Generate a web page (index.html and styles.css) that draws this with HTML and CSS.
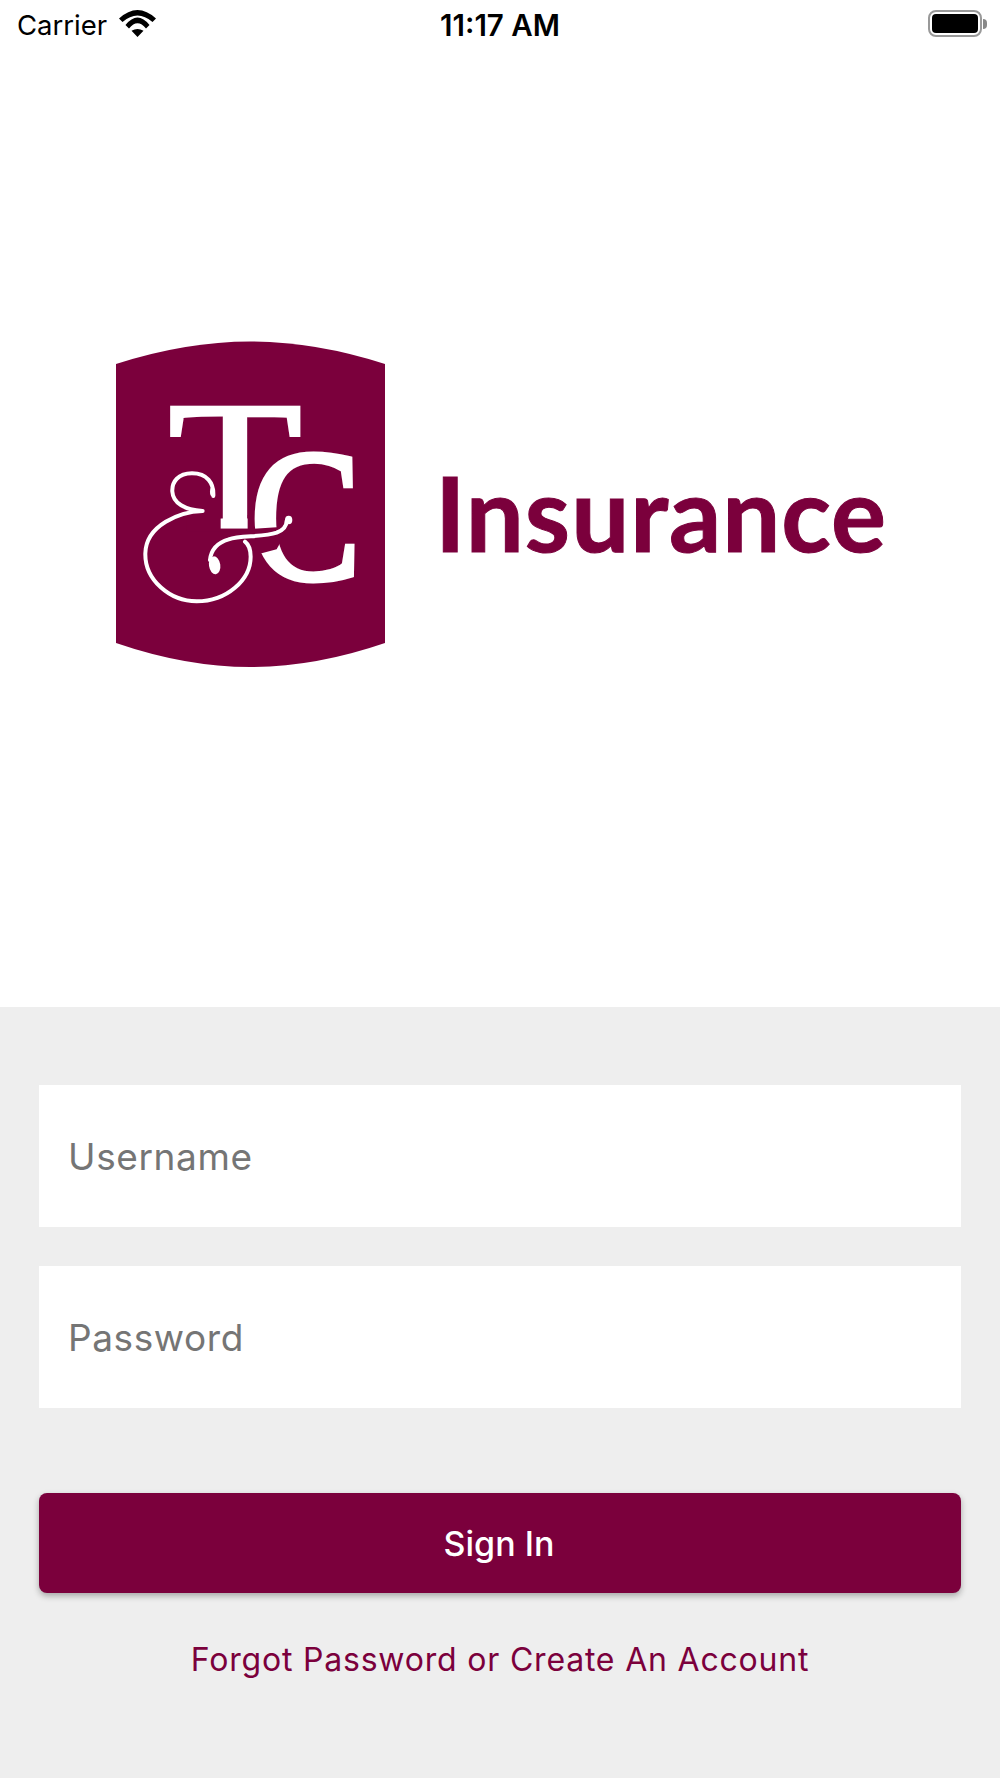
FILE: index.html
```html
<!DOCTYPE html>
<html lang="en">
<head>
<meta charset="utf-8">
<title>T&amp;C Insurance</title>
<link rel="stylesheet" href="styles.css">
</head>
<body>
<div class="screen">
  <header class="status">
    <div class="status-left">
      <span class="carrier">Carrier</span>
      <svg class="wifi" viewBox="0 0 37 27" width="37" height="27"><path d="M18.500 27 12.500 20.800Q18.500 17 24.500 20.800ZM6.500 15Q18.500 0 30.500 15L27 18.500Q18.500 8 10 18.500ZM0 8.500Q18.500 -8.500 37 8.500L33.500 12Q18.500 -1 3.500 12Z"/></svg>
    </div>
    <span class="time">11:17 AM</span>
    <div class="status-right">
      <span class="battery"><span class="battery-fill"></span></span>
      <span class="battery-nub"></span>
    </div>
  </header>

  <main class="brand">
    <div class="logo">
      <svg class="mark" viewBox="116 340 270 330" width="270" height="330" role="img" aria-label="T&amp;C">
        <path class="shield" d="M116 364Q186 341.500 250.500 341.500Q315 341.500 385 364V643Q315 667 250.500 667Q186 667 116 643Z"/>
        <g transform="translate(130 390) scale(.3333)">
          <text class="glyph" transform="translate(114 410) scale(3.600 3.000)" font-size="183">T</text>
          <path class="cut" d="M170 375H272V425H170ZM353 375H470V425H353ZM272 417H353V425H272Z"/>
          <text class="glyph glyph-c" transform="translate(360 566) scale(2.640 2.970)" font-size="190">C</text>
          <path class="cut" d="M350 418 440 412 472 420 440 478 395 490 350 490Z"/>
          <path class="amp" d="M250 318C252 280 232 250 186 250C145 250 125 275 127 305C129 340 165 360 218 363C150 365 48 405 46 490C44 570 120 634 200 634C290 634 362 570 362 500C362 480 358 465 345 455"/>
          <path class="amp" d="M470 392C470 410 460 420 440 428C400 442 330 436 296 448C262 458 243 480 240 510"/>
          <ellipse class="blob" cx="254" cy="526" rx="17" ry="27" transform="rotate(-8 254 526)"/>
          <ellipse class="blob" cx="476" cy="390" rx="11" ry="13"/>
          <ellipse class="blob" cx="247" cy="305" rx="7" ry="14"/>
        </g>
      </svg>
      <span class="wordmark">Insurance</span>
    </div>
  </main>

  <section class="login">
    <input class="field" type="text" placeholder="Username">
    <input class="field field-second" type="password" placeholder="Password">
    <button class="signin" type="button">Sign In</button>
    <a class="link" href="#">Forgot Password or Create An Account</a>
  </section>
</div>
</body>
</html>
```

FILE: styles.css
```css
* { box-sizing: border-box; }
html, body { margin: 0; padding: 0; background: #fff; }
body { font-family: Inter, "Noto Sans", sans-serif; }
.screen { width: 1000px; height: 1778px; display: flex; flex-direction: column; overflow: hidden; }

.status { height: 50px; flex: none; display: flex; align-items: center; justify-content: space-between; padding: 0 13px 0 17px; position: relative; color: #000; }
.status-left { display: flex; align-items: center; gap: 12px; }
.carrier { font-size: 27.500px; line-height: 50px; }
.wifi { display: block; fill: #000; margin-top: -3px; }
.time { position: absolute; left: 429px; width: 142px; text-align: center; font-size: 29.500px; font-weight: 600; line-height: 50px; white-space: nowrap; }
.status-right { display: flex; align-items: center; gap: 1px; margin-top: -3px; }
.battery { width: 54px; height: 27px; border: 2.500px solid #999; border-radius: 8px; padding: 2px; display: block; }
.battery-fill { display: block; width: 100%; height: 100%; background: #000; border-radius: 4px; }
.battery-nub { width: 4px; height: 10px; background: #888; border-radius: 0 4px 4px 0; }

.brand { flex: 1; min-height: 0; padding: 290px 0 0 116px; }
.logo { display: flex; align-items: flex-start; }
.mark { display: block; flex: none; }
.shield { fill: #7b003c; }
.glyph { fill: #fff; stroke: #fff; stroke-width: 3px; font-family: "Liberation Serif", serif; }
.glyph-c { stroke-width: 5px; }
.cut { fill: #7b003c; }
.amp { fill: none; stroke: #fff; stroke-width: 12; stroke-linecap: round; stroke-linejoin: round; }
.blob { fill: #fff; }
.wordmark { margin: 112px 0 0 49px; font-family: Lato, sans-serif; font-weight: 700; font-size: 103px; line-height: 120px; letter-spacing: 1px; -webkit-text-stroke: 1px #7b003c; color: #7b003c; }

.login { flex: none; height: 771px; background: #eee; padding: 78px 39px 0; display: flex; flex-direction: column; }
.field { display: block; width: 100%; height: 142px; flex: none; border: 0; border-radius: 0; background: #fff; padding: 0 29px; font-family: Inter, sans-serif; font-size: 37px; letter-spacing: .6px; color: #757575; outline: 0; }
.field::placeholder { color: #757575; opacity: 1; }
.field-second { margin-top: 39px; }
.signin { display: block; width: 100%; height: 100px; flex: none; margin-top: 85px; padding: 0 2px 0 0; border: 0; border-radius: 8px; background: #7b003c; color: #fff; font-family: Inter, sans-serif; font-size: 34px; font-weight: 500; box-shadow: 0 3px 6px rgba(0,0,0,.3); }
.link { display: block; margin-top: 47px; text-align: center; font-size: 32px; line-height: 40px; letter-spacing: .8px; color: #7b003c; text-decoration: none; }
```
